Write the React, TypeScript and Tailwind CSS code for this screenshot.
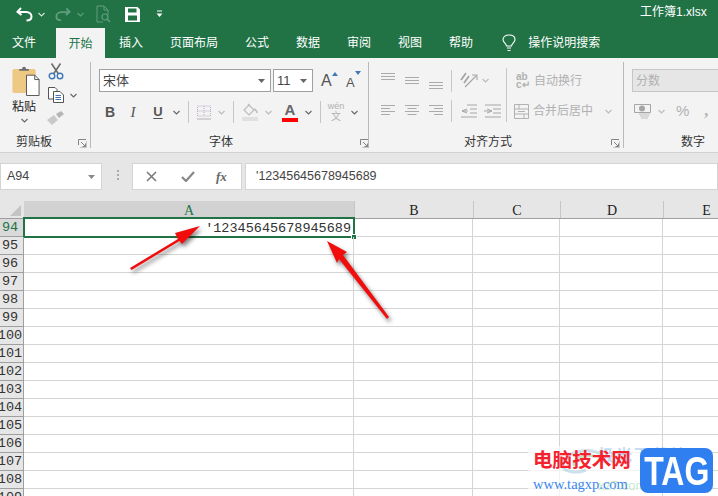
import type { ReactNode } from 'react';

const rows = [94, 95, 96, 97, 98, 99, 100, 101, 102, 103, 104, 105, 106, 107, 108, 109];

const Chevron = ({ color = '#666', className = '' }: { color?: string; className?: string }) => (
  <svg width="7" height="5" viewBox="0 0 7 5" className={`shrink-0 ${className}`}>
    <path d="M0.5 1 L3.5 4 L6.5 1" fill="none" stroke={color} strokeWidth="1.1" />
  </svg>
);

const Launcher = () => (
  <svg width="9" height="9" viewBox="0 0 9 9">
    <path d="M0.5 6 V0.5 H8 M3 3 L7.5 7.5 M7.5 4.5 V7.5 H4.5" fill="none" stroke="#777" strokeWidth="0.9" />
    <path d="M8.5 2 V8.5 H2" fill="none" stroke="#bbb" strokeWidth="0.8" />
  </svg>
);

const VLine = ({ className = 'h-[22px]' }: { className?: string }) => <div className={`w-px shrink-0 bg-[#c6c6c6] ${className}`} />;

const Lines = ({ ys, kind }: { ys: number[]; kind: 'left' | 'center' | 'right' | 'full' }) => (
  <svg width="14" height="22" viewBox="0 0 14 22" className="shrink-0">
    {ys.map((y, i) => {
      const short = i % 2 === 1;
      let x1 = 0;
      let x2 = 14;
      if (short && kind === 'left') x2 = 9;
      if (short && kind === 'center') { x1 = 2.5; x2 = 11.5; }
      if (short && kind === 'right') x1 = 5;
      return <line key={y} x1={x1} x2={x2} y1={y + 0.5} y2={y + 0.5} stroke="#ababab" strokeWidth="1" />;
    })}
  </svg>
);

const Group = ({ width, label, labelLeft, launcher, launcherRight, children }: {
  width: string;
  label: string;
  labelLeft: string;
  launcher?: boolean;
  launcherRight?: string;
  children: ReactNode;
}) => (
  <div className={`flex shrink-0 flex-col ${width}`}>
    <div className="h-[75px]">{children}</div>
    <div className="flex h-[17px] items-center">
      <span className={`text-[12px] leading-none text-[#333] ${labelLeft}`}>{label}</span>
      {launcher && <div className={`ml-auto mt-[3px] flex ${launcherRight}`}><Launcher /></div>}
    </div>
  </div>
);

const Divider = () => <div className="mt-[4px] h-[86px] w-px shrink-0 bg-[#b9b9b9]" />;

const TitleBar = () => (
  <div className="flex h-[28px] items-center overflow-hidden bg-[#217346] pl-[16px]">
    <svg width="17" height="15" viewBox="0 0 17 15" className="shrink-0">
      <path d="M5 1 L1.5 4.8 L5.5 8 M2 5 H10 C14 5 15.5 7.5 15.5 9.5 C15.5 12 13.5 13.5 10.5 13.5" fill="none" stroke="#fff" strokeWidth="2" />
    </svg>
    <Chevron color="#d5e5dc" className="ml-[5px]" />
    <svg width="16" height="15" viewBox="0 0 17 15" className="ml-[10px] shrink-0">
      <path d="M12 1 L15.5 4.8 L11.5 8 M15 5 H7 C3 5 1.5 7.5 1.5 9.5 C1.5 12 3.5 13.5 6.5 13.5" fill="none" stroke="#5f9e7d" strokeWidth="2" />
    </svg>
    <Chevron color="#5f9e7d" className="ml-[6px]" />
    <svg width="15" height="18" viewBox="0 0 15 18" className="ml-[12px] shrink-0">
      <path d="M1 1 H8 L12 5 V10 M8 1 V5 H12 M1 1 V17 H7" fill="none" stroke="#5f9e7d" strokeWidth="1" />
      <circle cx="9" cy="12" r="3" fill="none" stroke="#5f9e7d" strokeWidth="1.2" />
      <path d="M11 14 L14 17" stroke="#5f9e7d" strokeWidth="1.6" />
    </svg>
    <svg width="15" height="15" viewBox="0 0 15 15" className="ml-[14px] shrink-0">
      <path fillRule="evenodd" d="M0 0 H12.5 L15 2.5 V15 H0 Z M3 1.5 V5.5 H11.5 V1.5 Z M3 8.5 V13.5 H12 V8.5 Z" fill="#fff" />
    </svg>
    <svg width="7" height="8" viewBox="0 0 7 8" className="ml-[16px] shrink-0">
      <path d="M1 1 H6" stroke="#fff" strokeWidth="1" />
      <path d="M0.5 3.5 H6.5 L3.5 7 Z" fill="#fff" />
    </svg>
    <span className="ml-[477px] mt-[-4px] shrink-0 whitespace-nowrap text-[12px] text-white">工作簿1.xlsx</span>
  </div>
);

const Tabs = () => (
  <div className="flex h-[30px] items-center overflow-hidden bg-[#217346] text-[12px] leading-none text-white">
    <span className="ml-[12px]">文件</span>
    <span className="ml-[20px] flex h-[30px] w-[49px] items-center justify-center bg-[#f3f3f3] pt-[1px] text-[#217346]">开始</span>
    <div className="ml-[14px] flex shrink-0 gap-[27px]">
      <span>插入</span>
      <span>页面布局</span>
      <span>公式</span>
      <span>数据</span>
      <span>审阅</span>
      <span>视图</span>
      <span>帮助</span>
    </div>
    <svg width="14" height="18" viewBox="0 0 14 18" className="ml-[29px] shrink-0">
      <path d="M4.5 12 C4.5 9.5 1 8.5 1 5.5 C1 2.5 3.8 1 7 1 C10.2 1 13 2.5 13 5.5 C13 8.5 9.5 9.5 9.5 12 Z M5 14 H9 M5.5 16.5 H8.5" fill="none" stroke="#fff" strokeWidth="1.1" />
    </svg>
    <span className="ml-[12px] shrink-0">操作说明搜索</span>
  </div>
);

const Clipboard = () => (
  <div className="flex pl-[12px] pt-[7px]">
    <div className="flex w-[28px] flex-col items-start">
      <svg width="28" height="31" viewBox="0 0 28 32">
        <rect x="0" y="4" width="24" height="25" rx="2" fill="#eec983" />
        <path d="M7 6 V4 H10 C10 1 14 1 14 4 H17 V6 Z" fill="#6d6d6d" />
        <path d="M14.5 10.5 H23 L27.5 15 V31.5 H14.5 Z" fill="#fff" stroke="#555" strokeWidth="1" />
        <path d="M23 10.5 V15 H27.5" fill="none" stroke="#555" strokeWidth="1" />
      </svg>
      <span className="mt-[3px] text-[12px] leading-[16px] text-[#222]">粘贴</span>
      <Chevron className="ml-[9px] mt-[3px]" />
    </div>
    <div className="ml-[8px] mt-[-2px] flex flex-col">
      <svg width="16" height="17" viewBox="0 0 16 17">
        <path d="M3.5 0.5 L10.5 11 M12.5 0.5 L5.5 11" stroke="#666" strokeWidth="1.5" />
        <circle cx="4" cy="13" r="2.8" fill="none" stroke="#3f78b5" strokeWidth="1.4" />
        <circle cx="12" cy="13" r="2.8" fill="none" stroke="#3f78b5" strokeWidth="1.4" />
      </svg>
      <div className="mt-[7px] flex items-center">
        <svg width="16" height="16" viewBox="0 0 16 16">
          <path d="M0.5 0.5 H7 L9 2.5 V12 H0.5 Z" fill="#fff" stroke="#555" />
          <path d="M5.5 4.5 H12 L15.5 8 V15.5 H5.5 Z" fill="#fff" stroke="#555" />
          <path d="M7.5 8.5 H13 M7.5 10.5 H13 M7.5 12.5 H13" stroke="#3f78b5" />
        </svg>
        <Chevron className="ml-[6px]" />
      </div>
      <svg width="17" height="14" viewBox="0 0 17 14" className="ml-[-1px] mt-[8px]">
        <path d="M0 9 L7 4 L11 9 L5 14 Z" fill="#c9c9c9" />
        <path d="M9 3 L14 0 L17 3 L12 7 Z" fill="#b5b5b5" />
      </svg>
    </div>
  </div>
);

const Select = ({ width, text, left = 'pl-[3px]' }: { width: string; text: string; left?: string }) => (
  <div className={`flex h-[23px] items-center justify-between border border-[#a0a0a0] bg-white pr-[5px] text-[13px] text-[#444] ${width} ${left}`}>
    <span>{text}</span>
    <svg width="7" height="4" viewBox="0 0 7 4"><path d="M0 0 H7 L3.5 4 Z" fill="#666" /></svg>
  </div>
);

const FontGroup = () => (
  <div className="pl-[8px] pt-[11px]">
    <div className="flex items-center">
      <Select width="w-[172px]" text="宋体" />
      <div className="ml-[2px]"><Select width="w-[40px]" text="11" left="pl-[3px]" /></div>
      <div className="ml-[8px] flex w-[16px] items-start text-[16px] leading-none text-[#555]">
        A<svg width="6" height="4" viewBox="0 0 6 4" className="mt-[-1px] shrink-0"><path d="M0 4 H6 L3 0 Z" fill="#3f78b5" /></svg>
      </div>
      <div className="ml-[9px] flex w-[16px] items-start text-[13px] leading-none text-[#555]">
        <span className="mt-[3px]">A</span>
        <svg width="6" height="4" viewBox="0 0 6 4" className="mt-[-2px] shrink-0"><path d="M0 0 H6 L3 4 Z" fill="#3f78b5" /></svg>
      </div>
    </div>
    <div className="mt-[8px] flex h-[24px] items-center text-[#555]">
      <span className="w-[22px] text-center font-['Liberation_Sans'] text-[14px] font-bold">B</span>
      <span className="w-[24px] text-center font-['Liberation_Serif'] text-[15px] italic">I</span>
      <span className="w-[26px] text-center text-[13px] font-bold underline underline-offset-2">U</span>
      <Chevron className="ml-[2px]" />
      <div className="ml-[8px]"><VLine /></div>
      <svg width="14" height="15" viewBox="0 0 14 15" className="ml-[8px]">
        <path d="M0.5 1 H13.5 V11 H0.5 Z M7 1 V11 M0.5 6 H13.5" fill="none" stroke="#bba8c4" strokeWidth="1" strokeDasharray="1 1" />
        <path d="M0 14 H14" stroke="#b1b1b1" />
      </svg>
      <Chevron color="#bbb" className="ml-[7px]" />
      <div className="ml-[8px]"><VLine /></div>
      <svg width="16" height="18" viewBox="0 0 16 18" className="ml-[8px]">
        <path d="M2 7 L7 2 L12 7 L7 12 Z" fill="none" stroke="#bcbcbc" strokeWidth="1.2" />
        <path d="M6 1 L8 3 M12 6 C14 7 15 9 15 10" fill="none" stroke="#bcbcbc" strokeWidth="1.4" />
        <rect x="0" y="14" width="16" height="4" fill="#e0e0e0" />
      </svg>
      <Chevron color="#bbb" className="ml-[7px]" />
      <div className="ml-[10px] flex w-[16px] flex-col items-center">
        <span className="text-[15px] font-bold leading-[14px] text-[#666]">A</span>
        <div className="mt-[1px] h-[4px] w-[16px] bg-[#fe0000]" />
      </div>
      <Chevron className="ml-[7px]" />
      <div className="ml-[8px]"><VLine /></div>
      <div className="ml-[6px] flex w-[18px] flex-col items-center text-[#b1b1b1]">
        <span className="text-[9px] leading-[9px]">wén</span>
        <span className="text-[10px] leading-[11px]">文</span>
      </div>
      <Chevron className="ml-[6px]" />
    </div>
  </div>
);

const AlignGroup = () => (
  <div className="flex pt-[11px] text-[#b1b1b1]">
    <div className="w-[137px] pl-[12px]">
      <div className="flex h-[23px] items-start">
        <Lines kind="full" ys={[4, 7, 10]} />
        <div className="ml-[10px]"><Lines kind="full" ys={[8, 11, 14]} /></div>
        <div className="ml-[10px]"><Lines kind="full" ys={[13, 16, 19]} /></div>
        <div className="ml-[8px] mt-[1px]"><VLine /></div>
        <svg width="18" height="18" viewBox="0 0 18 18" className="ml-[8px] mt-[2px] shrink-0">
          <path d="M5 16 L16 5 M12 4 H17 V9" fill="none" stroke="#a5a5a5" strokeWidth="1.1" />
          <path d="M1 9 L6 2 M4 12 L9 5" fill="none" stroke="#a5a5a5" strokeWidth="1.8" />
        </svg>
        <Chevron color="#bbb" className="ml-[4px] mt-[9px]" />
      </div>
      <div className="mt-[8px] flex h-[22px] items-start">
        <Lines kind="left" ys={[5, 8, 11, 14]} />
        <div className="ml-[10px]"><Lines kind="center" ys={[5, 8, 11, 14]} /></div>
        <div className="ml-[10px]"><Lines kind="right" ys={[5, 8, 11, 14]} /></div>
        <div className="ml-[8px]"><VLine /></div>
        <svg width="17" height="14" viewBox="0 0 17 14" className="ml-[8px] mt-[4px] shrink-0">
          <path d="M7 1 H17 M10 5 H17 M10 9 H17 M1 13 H17 M7 5 L2 7 L7 9 M2 7 H8" fill="none" stroke="#a5a5a5" />
        </svg>
        <svg width="17" height="14" viewBox="0 0 17 14" className="ml-[7px] mt-[4px] shrink-0">
          <path d="M1 1 H17 M9 5 H17 M9 9 H17 M1 13 H17 M3 5 L8 7 L3 9 M0 7 H7" fill="none" stroke="#a5a5a5" />
        </svg>
      </div>
    </div>
    <VLine className="mt-[-1px] h-[54px]" />
    <div className="pl-[7px]">
      <div className="flex h-[23px] items-center">
        <div className="ml-[2px] flex w-[14px] flex-col text-[10px] font-bold leading-[8px] text-[#b1b1b1]">
          <span>ab</span>
          <span>c↵</span>
        </div>
        <span className="ml-[4px] text-[12px]">自动换行</span>
      </div>
      <div className="mt-[8px] flex h-[22px] items-center">
        <svg width="15" height="15" viewBox="0 0 15 15" className="shrink-0">
          <path d="M0.5 0.5 H14.5 V14.5 H0.5 Z M0.5 5 H14.5 M0.5 10 H14.5 M4 7.5 H11 M5 0.5 V5 M10 10 V14.5" fill="none" stroke="#b1b1b1" />
        </svg>
        <span className="ml-[4px] text-[12px]">合并后居中</span>
        <Chevron color="#bbb" className="ml-[12px]" />
      </div>
    </div>
  </div>
);

const NumberGroup = () => (
  <div className="pl-[8px] pt-[11px] text-[#b1b1b1]">
    <div className="flex h-[23px] w-[120px] items-center border border-[#c6c6c6] bg-[#e6e6e6] pl-[3px] text-[12px]">分数</div>
    <div className="mt-[8px] flex h-[22px] items-center">
      <svg width="17" height="17" viewBox="0 0 17 17" className="ml-[2px] shrink-0">
        <path d="M0.5 1.5 H16.5 V9.5 H0.5 Z" fill="none" stroke="#a5a5a5" />
        <circle cx="8" cy="5.5" r="3" fill="#a5a5a5" />
        <path d="M5 11 H16 M6 13 H15 M7 15 H14" stroke="#c0c0c0" strokeWidth="1.2" />
      </svg>
      <Chevron color="#bbb" className="ml-[7px]" />
      <span className="ml-[11px] text-[15px]">%</span>
      <span className="ml-[15px] font-['Liberation_Serif'] text-[16px] font-bold leading-none">,</span>
    </div>
  </div>
);

const Ribbon = () => (
  <div className="flex h-[95px] overflow-hidden border-b border-[#d2d2d2] bg-[#f3f3f3]">
    <Group width="w-[90px]" label="剪贴板" labelLeft="ml-[16px]" launcher launcherRight="mr-[3px]"><Clipboard /></Group>
    <Divider />
    <Group width="w-[277px]" label="字体" labelLeft="ml-[118px]" launcher launcherRight="mr-[-1px]"><FontGroup /></Group>
    <Divider />
    <Group width="w-[254px]" label="对齐方式" labelLeft="ml-[95px]" launcher launcherRight="mr-[3px]"><AlignGroup /></Group>
    <Divider />
    <Group width="w-[140px]" label="数字" labelLeft="ml-[57px]"><NumberGroup /></Group>
  </div>
);

const FormulaBar = () => (
  <div className="flex h-[48px] items-start bg-[#e6e6e6] pt-[10px]">
    <div className="flex h-[27px] w-[102px] items-center justify-between border border-[#d4d4d4] bg-white pl-[6px] pr-[6px] text-[12.5px] text-[#444]">
      <span>A94</span>
      <svg width="7" height="4" viewBox="0 0 7 4"><path d="M0 0 H7 L3.5 4 Z" fill="#888" /></svg>
    </div>
    <div className="ml-[15px] mt-[7px] flex flex-col gap-[2px]">
      <div className="h-[2px] w-[2px] bg-[#aaa]" />
      <div className="h-[2px] w-[2px] bg-[#aaa]" />
      <div className="h-[2px] w-[2px] bg-[#aaa]" />
    </div>
    <div className="ml-[13px] flex h-[27px] w-[110px] items-center border border-[#d4d4d4] bg-white">
      <svg width="11" height="11" viewBox="0 0 11 11" className="ml-[13px]">
        <path d="M1 1 L10 10 M10 1 L1 10" stroke="#777" strokeWidth="1.5" />
      </svg>
      <svg width="14" height="11" viewBox="0 0 14 11" className="ml-[24px]">
        <path d="M1 6 L5 10 L13 1" fill="none" stroke="#888" strokeWidth="2.2" />
      </svg>
      <span className="ml-[21px] font-['Liberation_Serif'] text-[13px] font-bold italic text-[#666]">fx</span>
    </div>
    <div className="ml-[3px] flex h-[27px] flex-1 items-center border border-[#d4d4d4] bg-white pl-[10px] text-[12.5px] text-[#444]">
      '12345645678945689
    </div>
  </div>
);

const ColumnHeader = () => (
  <div className="flex h-[18px] border-b border-[#9f9f9f] bg-[#e6e6e6] font-['Liberation_Serif'] text-[14px] leading-[19px] text-[#222]">
    <div className="flex w-[24px] shrink-0 items-end justify-end pb-[2px] pr-[3px]">
      <svg width="11" height="11" viewBox="0 0 11 11"><path d="M11 0 V11 H0 Z" fill="#c4c4c4" /></svg>
    </div>
    <div className="w-[330px] shrink-0 bg-[#d2d2d2] text-center text-[#217346]">A</div>
    <div className="w-[119px] shrink-0 border-l border-[#c6c6c6] text-center">B</div>
    <div className="w-[87px] shrink-0 border-l border-[#c6c6c6] text-center">C</div>
    <div className="w-[103px] shrink-0 border-l border-[#c6c6c6] text-center">D</div>
    <div className="w-[86px] shrink-0 border-l border-[#c6c6c6] text-center">E</div>
  </div>
);

const Row = ({ n }: { n: number }) => {
  const active = n === 94;
  return (
    <div className="relative flex h-[18px] font-['Liberation_Mono'] text-[13.5px] leading-[17px] text-[#333]">
      <div className={`flex w-[24px] shrink-0 justify-center overflow-hidden whitespace-nowrap border-b border-r border-[#9f9f9f] pr-[3px] ${active ? 'bg-[#d9d9d9] text-[#217346]' : 'bg-[#e6e6e6]'}`}>
        {n}
      </div>
      <div className="w-[330px] shrink-0 border-b border-r border-[#d4d4d4]" />
      <div className="w-[119px] shrink-0 border-b border-r border-[#d4d4d4]" />
      <div className="w-[87px] shrink-0 border-b border-r border-[#d4d4d4]" />
      <div className="w-[103px] shrink-0 border-b border-r border-[#d4d4d4]" />
      <div className="w-[86px] shrink-0 border-b border-r border-[#d4d4d4]" />
      {active && (
        <div className="absolute left-[23px] top-[-2px] flex h-[21px] w-[332px] items-center justify-end border-2 border-[#217346] pr-[2px] pt-[1px]">
          '12345645678945689
          <div className="absolute bottom-[-4px] right-[-4px] h-[6px] w-[6px] border border-white bg-[#217346]" />
        </div>
      )}
    </div>
  );
};

const Arrows = () => (
  <svg width="718" height="496" viewBox="0 0 718 496" className="pointer-events-none absolute left-0 top-0 drop-shadow-[2px_3px_2px_rgba(0,0,0,0.5)]">
    <path d="M130 268 L178 239 L175 233 L200 226 L182 244 L179.5 241 L131.5 270 Z" fill="#f20d0d" />
    <path d="M327 241 L347 252 L343 255 L389 317 L387 319 L339 259 L337 263 Z" fill="#f20d0d" />
  </svg>
);

const Watermark = () => (
  <div className="absolute bottom-0 right-0 h-[50px] w-[190px]">
    <div className="absolute inset-0 w-[120px] bg-white/70" />
    <span className="absolute left-[70px] top-[-2px] whitespace-nowrap text-[16px] font-bold tracking-[2px] text-[#9cc4ec]/60">极光下载站</span>
    <svg width="50" height="30" viewBox="0 0 50 30" className="absolute left-[30px] top-[2px]">
      <path d="M42 6 C28 -2 6 6 4 16 C4 24 18 26 28 22" fill="none" stroke="#a9cfe0" strokeWidth="3" opacity="0.6" />
      <path d="M36 8 C24 6 14 12 16 18" fill="none" stroke="#9fd3a8" strokeWidth="3" opacity="0.6" />
    </svg>
    <span className="absolute left-[5px] top-[3px] whitespace-nowrap font-['Liberation_Serif','Noto_Sans_CJK_SC',serif] text-[19.6px] font-bold leading-[24px] text-[#f5222d]">电脑技术网</span>
    <span className="absolute left-[5px] top-[30px] whitespace-nowrap font-['Liberation_Serif'] text-[14.5px] leading-[16px] text-[#3a86ee]">www.tagxp.com</span>
    <span className="absolute left-[70px] top-[30px] whitespace-nowrap text-[13px] text-[#8fcf9f]/50">xz7.com</span>
    <div className="absolute bottom-[3px] right-[5px] flex h-[45px] w-[73px] items-center justify-center rounded-[8px] bg-[#2f7ff0]">
      <span className="scale-x-[0.8] font-['Liberation_Sans'] text-[40px] font-bold leading-none text-white">TAG</span>
    </div>
  </div>
);

const App = () => (
  <div className="relative h-[496px] w-[718px] overflow-hidden bg-white font-['Liberation_Sans','Noto_Sans_CJK_SC',sans-serif]">
    <TitleBar />
    <Tabs />
    <Ribbon />
    <FormulaBar />
    <ColumnHeader />
    {rows.map((n) => <Row key={n} n={n} />)}
    <Arrows />
    <Watermark />
  </div>
);

export default App;
